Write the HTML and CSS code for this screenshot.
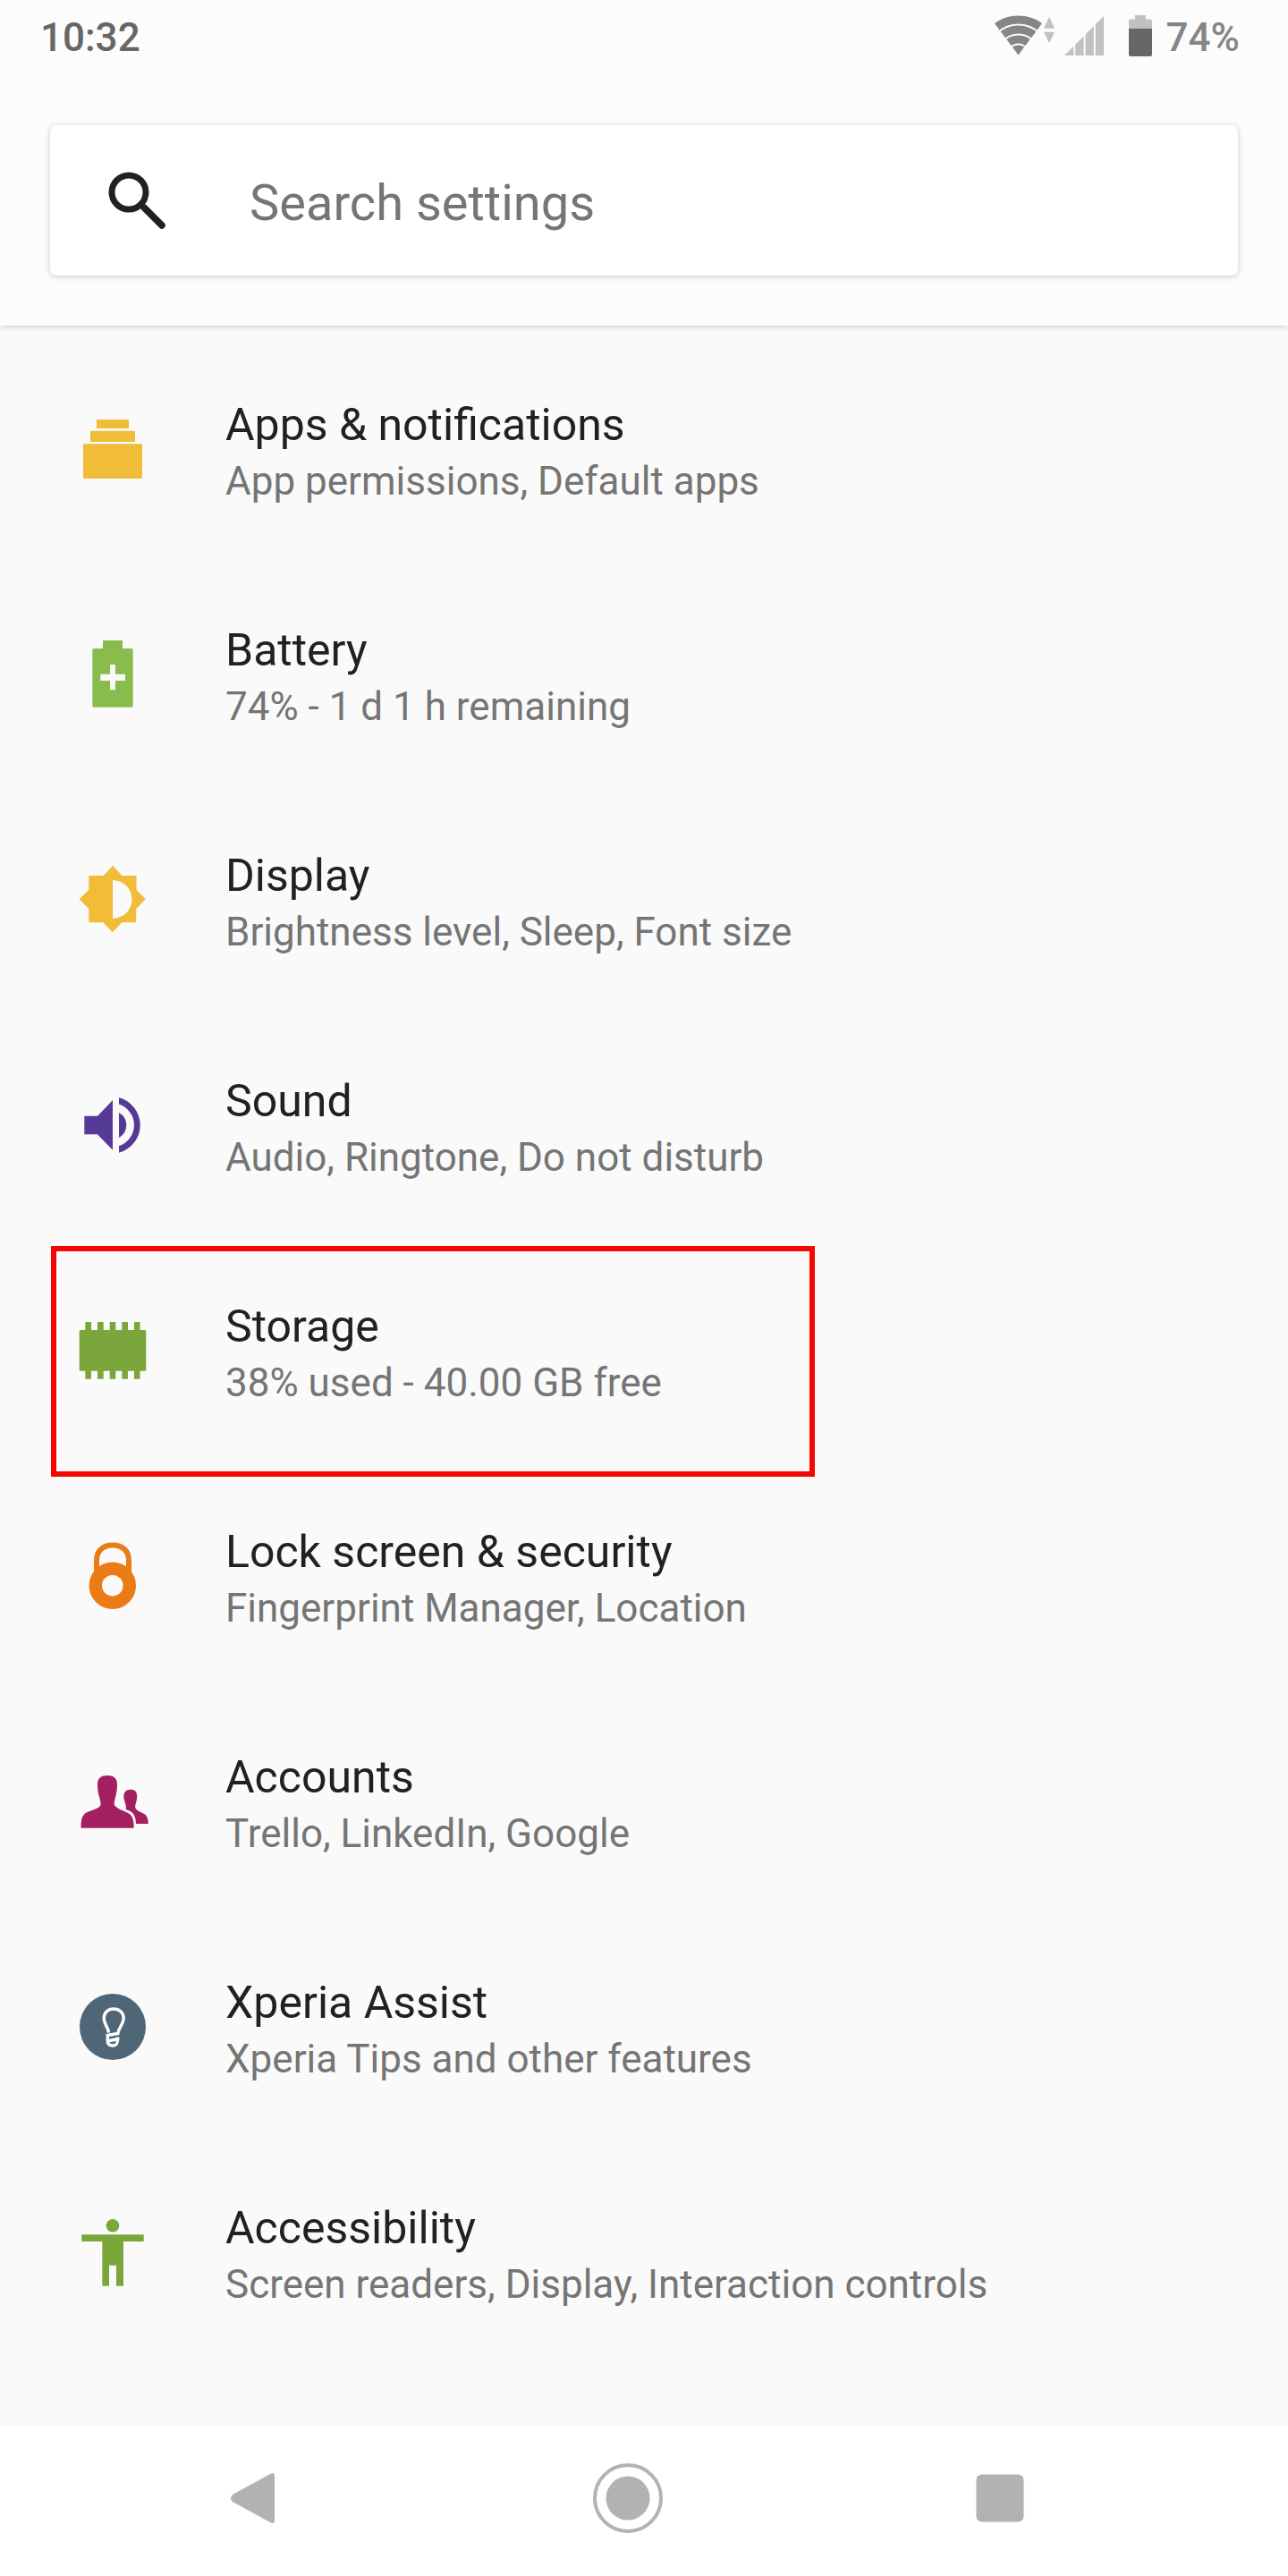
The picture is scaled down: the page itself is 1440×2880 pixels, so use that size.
FILE: index.html
```html
<!DOCTYPE html>
<html lang="en">
<head>
    <meta charset="UTF-8">
    <meta name="viewport" content="width=device-width, initial-scale=1.0">
    <title>Settings</title>
    <link rel="stylesheet" href="styles.css">
</head>
<body>
    <!-- Header Section -->
    <header class="header">
        <div class="status-bar">
            <span class="clock">10:32</span>
            <div class="status-icons">
                <svg class="wifi" width="68" height="50" viewBox="0 0 68 50" aria-hidden="true">
                    <path fill="#868686" d="M26.5 44.5L0 9.3C14-2.4 39-2.4 53 9.3Z"/>
                    <g fill="none" stroke="#fcfcfc" stroke-width="2">
                        <circle cx="26.5" cy="44.5" r="34"/>
                        <circle cx="26.5" cy="44.5" r="23"/>
                        <circle cx="26.5" cy="44.5" r="12"/>
                    </g>
                    <path fill="#c1c1c1" d="M61 1.7L67 14.7H55ZM55 18.7H67L61 31.3Z"/>
                </svg>
                <svg class="signal" width="44" height="50" viewBox="0 0 44 50" aria-hidden="true">
                    <path fill="#c1c1c1" d="M0 45L44 1V45Z"/>
                    <path stroke="#fcfcfc" stroke-width="2" d="M11.2 0V46M22.6 0V46M33.8 0V46"/>
                </svg>
                <svg class="battery" width="26" height="50" viewBox="0 0 26 50" aria-hidden="true">
                    <path fill="#c1c1c1" d="M7 0H19V4.6H24Q26 4.6 26 6.6V15H0V6.6Q0 4.6 2 4.6H7Z"/>
                    <path fill="#666" d="M0 15H26V44Q26 46 24 46H2Q0 46 0 44Z"/>
                </svg>
                <span class="battery-level">74%</span>
            </div>
        </div>
        <label class="search">
            <svg width="66" height="66" viewBox="0 0 66 66" aria-label="Search">
                <circle cx="24" cy="24" r="19" fill="none" stroke="#212121" stroke-width="7"/>
                <path d="M41 41L61 61" fill="none" stroke="#212121" stroke-width="7.5" stroke-linecap="round"/>
            </svg>
            <input type="text" placeholder="Search settings">
        </label>
    </header>

    <!-- Settings List -->
    <main>
        <ul class="settings">
            <li>
                <a href="#apps">
                    <svg viewBox="0 0 90 90" fill="#f1bc37" aria-hidden="true">
                        <path d="M27 12H63V22H27ZM20 24.7H70V37H20ZM12 39.3H78V78H12Z"/>
                    </svg>
                    <span class="text">
                        <span class="title">Apps &amp; notifications</span>
                        <span class="summary">App permissions, Default apps</span>
                    </span>
                </a>
            </li>
            <li>
                <a href="#battery">
                    <svg viewBox="0 0 90 90" fill="#88bd4e" aria-hidden="true">
                        <path fill-rule="evenodd" d="M34 7H56V16H66Q67.7 16 67.7 18V80Q67.7 81.7 66 81.7H24Q22.3 81.7 22.3 80V18Q22.3 16 24 16H34ZM42 34V44.7H31.3V52H42V62.3H48V52H59V44.7H48V34Z"/>
                    </svg>
                    <span class="text">
                        <span class="title">Battery</span>
                        <span class="summary">74% - 1 d 1 h remaining</span>
                    </span>
                </a>
            </li>
            <li>
                <a href="#display">
                    <svg viewBox="0 0 90 90" fill="#f1bc37" aria-hidden="true">
                        <path fill-rule="evenodd" d="M45 6.7L55.5 18H71.5V33.7L81.7 44.3L71.2 55V70.3H55.3L44.7 81.3L34.3 70.3H18.3V55L7.7 44.3L18.3 33.7V18H34.7ZM45 23V66A21.5 21.5 0 0 0 45 23Z"/>
                    </svg>
                    <span class="text">
                        <span class="title">Display</span>
                        <span class="summary">Brightness level, Sleep, Font size</span>
                    </span>
                </a>
            </li>
            <li>
                <a href="#sound">
                    <svg viewBox="0 0 90 90" fill="#553b95" aria-hidden="true">
                        <path d="M13.3 34.7H28L45 17V72.7L28 55.3H13.3Z"/>
                        <path d="M52 31A16 16 0 0 1 52 59ZM52 14A32 32 0 0 1 52 75.8V68.2A24.5 24.5 0 0 0 52 21.6Z"/>
                    </svg>
                    <span class="text">
                        <span class="title">Sound</span>
                        <span class="summary">Audio, Ringtone, Do not disturb</span>
                    </span>
                </a>
            </li>
            <li class="marked">
                <a href="#storage">
                    <svg viewBox="0 0 90 90" fill="#7ba63c" aria-hidden="true">
                        <rect x="7.7" y="22" width="74.6" height="45.7" rx="1.5"/>
                        <path d="M14.3 13H21V76.7H14.3ZM28 13H34.7V76.7H28ZM41.7 13H48.3V76.7H41.7ZM55.3 13H62V76.7H55.3ZM69 13H75.5V76.7H69Z"/>
                    </svg>
                    <span class="text">
                        <span class="title">Storage</span>
                        <span class="summary">38% used - 40.00 GB free</span>
                    </span>
                </a>
            </li>
            <li>
                <a href="#security">
                    <svg viewBox="0 0 90 90" fill="none" stroke="#ea7b17" aria-hidden="true">
                        <path stroke-width="6" d="M27 44V27.5C27 17 34 10.4 45 10.4S63 17 63 27.5V44"/>
                        <circle cx="44.8" cy="55.7" r="19" stroke-width="14.4"/>
                    </svg>
                    <span class="text">
                        <span class="title">Lock screen &amp; security</span>
                        <span class="summary">Fingerprint Manager, Location</span>
                    </span>
                </a>
            </li>
            <li>
                <a href="#accounts">
                    <svg viewBox="0 0 90 90" fill="#a31f62" aria-hidden="true">
                        <path d="M39 16C46 16 50 19 50 26C50 38 46.5 42 46.7 48.7C49.5 54 60 55.5 64.5 59.5C68 63 68.7 68 68.7 74.7H9.5C9.5 67 10 62 14 58.5C19 54.5 29 54.5 31.7 48.7C31.5 42 28 38 28 26C28 19 32 16 39 16Z"/>
                        <path d="M65 31.7C70 31.7 72.4 34.5 72.2 39.5C72 46 70 47.5 70.2 52C72.5 57 80 57.5 82.5 61C84 63.5 84.7 66 84.7 70H71C70.7 60 67 55.5 59.8 54.2C60.5 47.5 57.3 45 57.3 39.5C57.3 34.5 60 31.7 65 31.7Z"/>
                    </svg>
                    <span class="text">
                        <span class="title">Accounts</span>
                        <span class="summary">Trello, LinkedIn, Google</span>
                    </span>
                </a>
            </li>
            <li>
                <a href="#assist">
                    <svg viewBox="0 0 90 90" aria-hidden="true">
                        <circle cx="45" cy="45" r="37" fill="#4f6677"/>
                        <path fill="none" stroke="#fff" stroke-width="3.4" d="M40.5 51.5C40 45.5 35.2 42 35.2 35.5C35.2 29 40 25 46 25S57.2 29 57.2 35.5C57.2 42 51.5 45.5 50.8 52.5L39.3 54.5V61C39.3 64.5 42 66 45.5 66S50.8 64 50.8 56.5M39.3 61L51 58.5"/>
                    </svg>
                    <span class="text">
                        <span class="title">Xperia Assist</span>
                        <span class="summary">Xperia Tips and other features</span>
                    </span>
                </a>
            </li>
            <li>
                <a href="#accessibility">
                    <svg viewBox="0 0 90 90" fill="#7ba63c" aria-hidden="true">
                        <circle cx="45" cy="15.3" r="7.3"/>
                        <path d="M10.3 25.3H79.7V33H57V82.7H49V59.7H41V82.7H33.3V33H10.3Z"/>
                    </svg>
                    <span class="text">
                        <span class="title">Accessibility</span>
                        <span class="summary">Screen readers, Display, Interaction controls</span>
                    </span>
                </a>
            </li>
        </ul>
    </main>

    <!-- Navigation Bar -->
    <nav class="nav-bar">
        <button type="button" aria-label="Back">
            <svg width="80" height="80" viewBox="0 0 80 80">
                <path fill="#b2b2b2" d="M14 36L57 12.5Q61 11 61 15V65Q61 69 57 67.5L14 44Q10 40 14 36Z"/>
            </svg>
        </button>
        <button type="button" aria-label="Home">
            <svg width="80" height="80" viewBox="0 0 80 80">
                <circle cx="40" cy="40" r="37" fill="none" stroke="#b2b2b2" stroke-width="4"/>
                <circle cx="40" cy="40" r="24.5" fill="#b2b2b2"/>
            </svg>
        </button>
        <button type="button" aria-label="Recent apps">
            <svg width="80" height="80" viewBox="0 0 80 80">
                <rect x="13.5" y="13.5" width="53" height="53" rx="6" fill="#b2b2b2"/>
            </svg>
        </button>
    </nav>
</body>
</html>
```

FILE: styles.css
```css
/* General Styles */
*,
*::after {
    box-sizing: border-box;
}
body {
    display: flex;
    flex-direction: column;
    min-height: 100vh;
    margin: 0;
    font-family: Roboto, sans-serif;
    background-color: #fafafa;
    color: #212121;
}
svg {
    display: block;
    flex: none;
}

/* Header */
.header {
    padding-bottom: 56px;
    background-color: #fcfcfc;
    box-shadow: 0 1px 8px rgba(0, 0, 0, 0.18);
}
.status-bar {
    display: flex;
    align-items: center;
    justify-content: space-between;
    height: 84px;
    padding: 0 54px 0 45px;
    font-size: 44px;
    font-weight: 500;
}
.clock {
    color: #666;
}
.status-icons {
    display: flex;
    align-items: center;
    color: #868686;
}
.signal {
    margin-left: 10px;
}
.battery {
    margin-left: 28px;
}
.battery-level {
    margin-left: 16px;
}
.search {
    display: flex;
    align-items: center;
    gap: 93px;
    height: 168px;
    margin: 56px 56px 0;
    padding: 0 64px;
    background-color: #fff;
    border-radius: 7px;
    box-shadow: 0 1px 6px rgba(0, 0, 0, 0.22);
}
.search input {
    flex: 1;
    min-width: 0;
    padding: 6px 0 0;
    border: none;
    outline: none;
    background: none;
    font-family: inherit;
    font-size: 56px;
    color: #212121;
}
.search input::placeholder {
    color: #757575;
    opacity: 1;
}

/* Settings List */
main {
    flex: 1;
}
.settings {
    list-style: none;
    margin: 0;
    padding: 12px 0 0;
}
.settings li {
    position: relative;
}
.settings a {
    display: flex;
    align-items: center;
    gap: 81px;
    height: 252px;
    padding: 0 81px;
    color: inherit;
    text-decoration: none;
}
.settings svg {
    width: 90px;
    height: 90px;
}
.text {
    display: flex;
    flex-direction: column;
    padding-top: 6px;
}
.title {
    font-size: 50px;
    line-height: 66px;
}
.summary {
    font-size: 44px;
    line-height: 60px;
    color: #757575;
}

/* Red frame drawn over the marked row */
.marked::after {
    content: "";
    position: absolute;
    top: 9px;
    left: 57px;
    width: 854px;
    height: 258px;
    border: 6px solid #f60505;
    pointer-events: none;
}

/* Navigation Bar */
.nav-bar {
    display: grid;
    grid-template-columns: repeat(3, 1fr);
    height: 168px;
    padding: 0 114px 6px 78px;
    background-color: #fff;
}
.nav-bar button {
    display: flex;
    align-items: center;
    justify-content: center;
    padding: 0;
    border: none;
    background: none;
}
```
